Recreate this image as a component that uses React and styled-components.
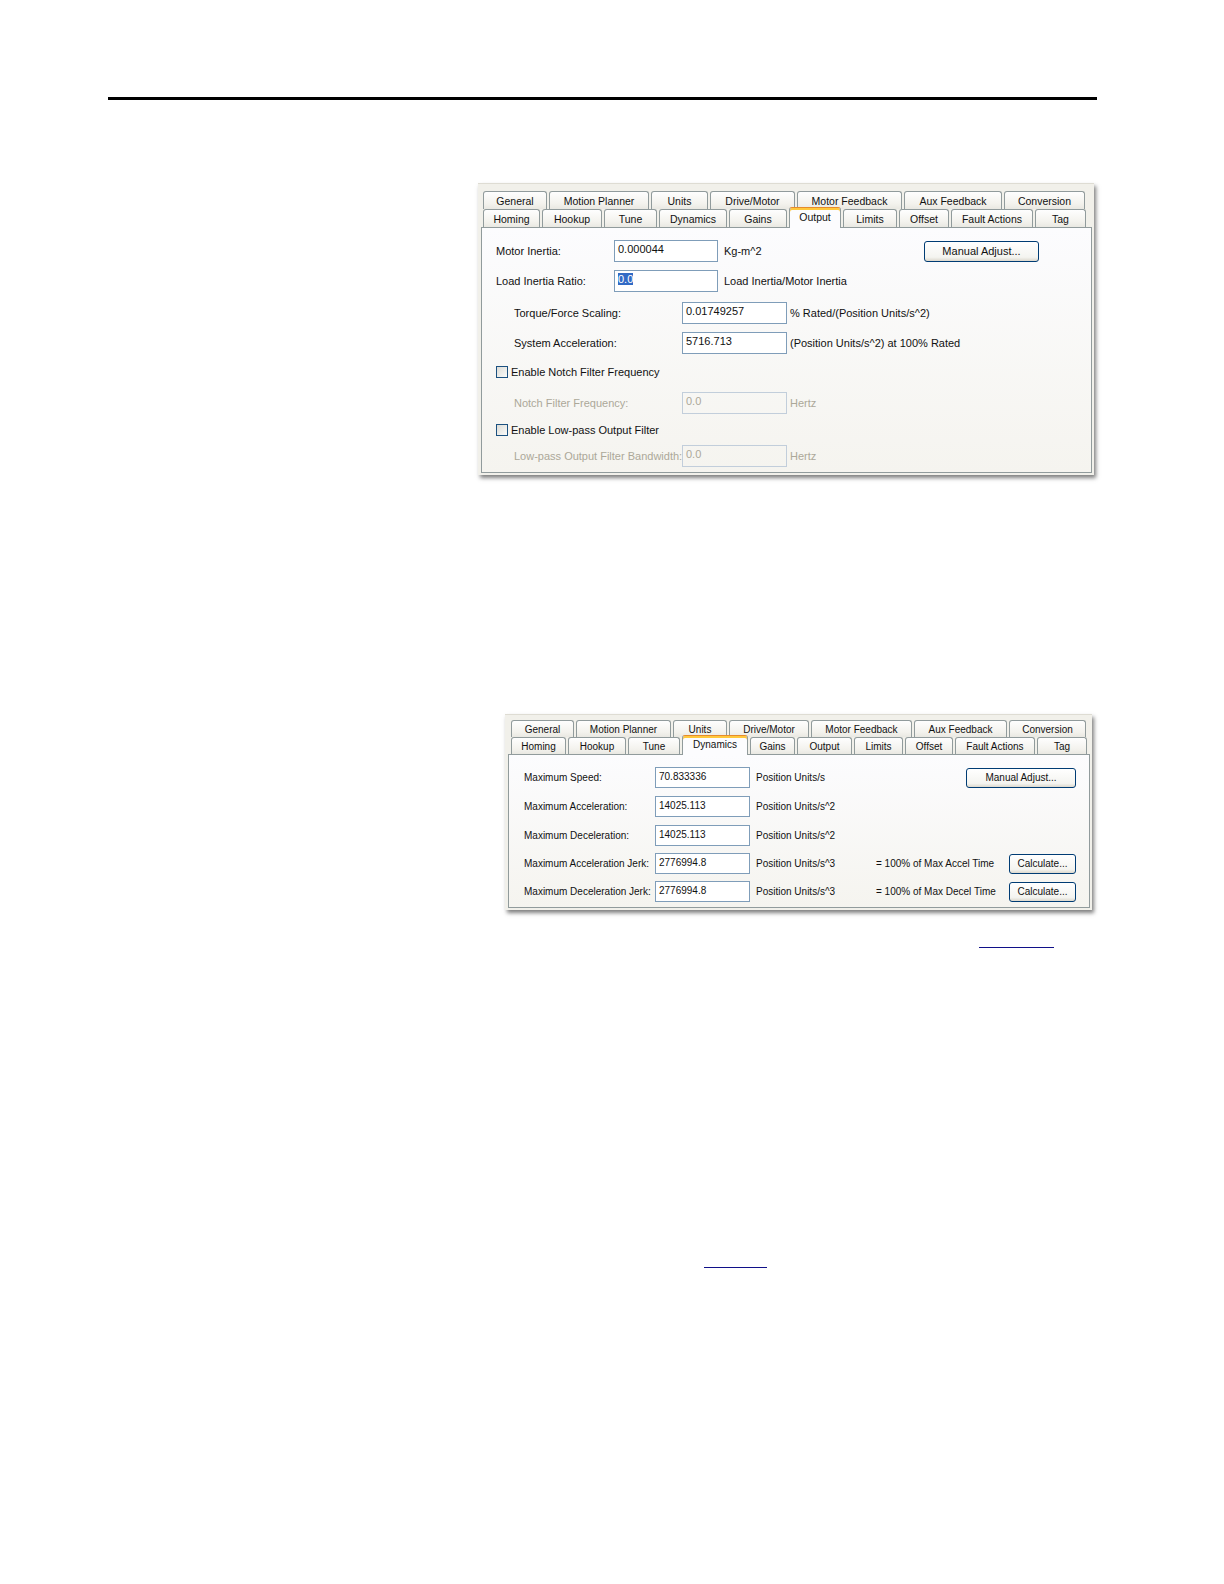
import React from "react";
import styled, { createGlobalStyle } from "styled-components";

const GlobalStyle = createGlobalStyle`
  html, body {
    margin: 0;
    padding: 0;
    background: #fff;
  }
  body {
    font-family: "Liberation Sans", Arial, sans-serif;
  }
`;

const Page = styled.div`
  width: 1224px;
  min-height: 1584px;
  box-sizing: border-box;
  padding: 97px 0 0 108px;
`;

const Rule = styled.div`
  width: 989px;
  height: 3px;
  background: #000;
`;

const Dialog = styled.div`
  box-sizing: border-box;
  margin: ${p => p.$top}px 0 0 ${p => p.$left}px;
  width: ${p => p.$width}px;
  padding: ${p => p.$padTop}px 2px 2px 3px;
  background: #f1f0ea;
  border-top: 1px solid #dedcd3;
  box-shadow: 2px 3px 4px rgba(0, 0, 0, 0.5);
  font-size: ${p => p.$font}px;
  color: #111;
`;

const TabRow = styled.div`
  display: flex;
  gap: 2px;
  height: ${p => p.$height}px;
  padding-left: ${p => p.$indent}px;
`;

const Tab = styled.div`
  flex: none;
  position: relative;
  z-index: ${p => (p.$active ? 2 : 1)};
  box-sizing: border-box;
  width: ${p => p.$width}px;
  height: ${p => (p.$active ? "calc(100% + 3px)" : "100%")};
  margin-top: ${p => (p.$active ? -2 : 0)}px;
  display: flex;
  align-items: center;
  justify-content: center;
  padding-bottom: ${p => (p.$active ? 3 : 0)}px;
  border: 1px solid #919b9c;
  border-bottom: none;
  border-radius: 3px 3px 0 0;
  white-space: nowrap;
  font-size: ${p => p.$font}px;
  background: ${p =>
    p.$active ? "#fcfcfe" : "linear-gradient(#fefefe, #f3f2ed 70%, #e9e8e2)"};
  ${p =>
    p.$active &&
    `
    border-top: 1px solid #e68b2c;
    box-shadow: inset 0 2px 0 #ffc83c;
  `}
`;

const Panel = styled.div`
  position: relative;
  box-sizing: border-box;
  height: ${p => p.$height}px;
  border: 1px solid #919b9c;
  background: linear-gradient(#fcfcfe, #f5f4ef);
  display: flex;
  flex-direction: column;
`;

const FieldRow = styled.div`
  display: flex;
  align-items: center;
  flex: none;
  height: ${p => p.$h}px;
  margin-top: ${p => p.$gap}px;
  padding-left: ${p => p.$indent}px;
  padding-right: ${p => p.$right || 0}px;
`;

const Label = styled.span`
  flex: none;
  width: ${p => (p.$width ? `${p.$width}px` : "auto")};
  color: ${p => (p.$disabled ? "#aca899" : "#111")};
  white-space: nowrap;
`;

const Field = styled.div`
  flex: none;
  box-sizing: border-box;
  width: ${p => p.$width}px;
  height: 100%;
  padding: 2px 3px 0;
  line-height: 13px;
  border: 1px solid ${p => (p.$disabled ? "#c2cedb" : "#7f9db9")};
  background: ${p => (p.$disabled ? "transparent" : "#fff")};
  color: ${p => (p.$disabled ? "#aca899" : "#111")};
  white-space: nowrap;
`;

const Selected = styled.span`
  background: #316ac5;
  color: #fff;
`;

const Unit = styled.span`
  flex: none;
  margin-left: ${p => p.$gap}px;
  width: ${p => (p.$width ? `${p.$width}px` : "auto")};
  color: ${p => (p.$disabled ? "#aca899" : "#111")};
  white-space: nowrap;
`;

const Button = styled.div`
  flex: none;
  box-sizing: border-box;
  margin-left: auto;
  width: ${p => p.$width}px;
  height: ${p => p.$height}px;
  display: flex;
  align-items: center;
  justify-content: center;
  border: 1px solid #003c74;
  border-radius: 3px;
  background: linear-gradient(#ffffff, #f4f4f0 80%, #dcd8cd);
  white-space: nowrap;
`;

const Check = styled.span`
  flex: none;
  box-sizing: border-box;
  width: 12px;
  height: 12px;
  margin-right: 3px;
  border: 1px solid #1c5180;
  background: linear-gradient(135deg, #dcdcd7, #fbfbf9);
`;

const LinkLine = styled.div`
  margin: ${p => p.$top}px 0 0 ${p => p.$left}px;
  width: ${p => p.$width}px;
  height: 1px;
  background: #101088;
`;

const outputTabs = [
  [
    ["General", 64],
    ["Motion Planner", 100],
    ["Units", 57],
    ["Drive/Motor", 85],
    ["Motor Feedback", 105],
    ["Aux Feedback", 98],
    ["Conversion", 81],
  ],
  [
    ["Homing", 57],
    ["Hookup", 60],
    ["Tune", 53],
    ["Dynamics", 68],
    ["Gains", 58],
    ["Output", 52, true],
    ["Limits", 54],
    ["Offset", 50],
    ["Fault Actions", 82],
    ["Tag", 51],
  ],
];

const dynamicsTabs = [
  [
    ["General", 63],
    ["Motion Planner", 95],
    ["Units", 54],
    ["Drive/Motor", 80],
    ["Motor Feedback", 101],
    ["Aux Feedback", 93],
    ["Conversion", 77],
  ],
  [
    ["Homing", 55],
    ["Hookup", 58],
    ["Tune", 52],
    ["Dynamics", 66, true],
    ["Gains", 45],
    ["Output", 55],
    ["Limits", 49],
    ["Offset", 48],
    ["Fault Actions", 80],
    ["Tag", 50],
  ],
];

const Tabs = ({ rows, heights, indent, font }) => (
  <>
    {rows.map((row, i) => (
      <TabRow key={i} $height={heights[i]} $indent={indent}>
        {row.map(([name, width, active]) => (
          <Tab key={name} $width={width} $active={active} $font={font}>
            {name}
          </Tab>
        ))}
      </TabRow>
    ))}
  </>
);

const OutputDialog = () => (
  <Dialog $top={83} $left={370} $width={616} $padTop={7} $font={11}>
    <Tabs rows={outputTabs} heights={[18, 18]} indent={2} font={10.5} />
    <Panel $height={246}>
      <FieldRow $h={22} $gap={12} $indent={14} $right={52}>
        <Label $width={118}>Motor Inertia:</Label>
        <Field $width={104}>0.000044</Field>
        <Unit $gap={6}>Kg-m^2</Unit>
        <Button $width={115} $height={21}>
          Manual Adjust...
        </Button>
      </FieldRow>
      <FieldRow $h={22} $gap={8} $indent={14}>
        <Label $width={118}>Load Inertia Ratio:</Label>
        <Field $width={104}>
          <Selected>0.0</Selected>
        </Field>
        <Unit $gap={6}>Load Inertia/Motor Inertia</Unit>
      </FieldRow>
      <FieldRow $h={22} $gap={10} $indent={32}>
        <Label $width={168}>Torque/Force Scaling:</Label>
        <Field $width={105}>0.01749257</Field>
        <Unit $gap={3}>% Rated/(Position Units/s^2)</Unit>
      </FieldRow>
      <FieldRow $h={22} $gap={8} $indent={32}>
        <Label $width={168}>System Acceleration:</Label>
        <Field $width={105}>5716.713</Field>
        <Unit $gap={3}>(Position Units/s^2) at 100% Rated</Unit>
      </FieldRow>
      <FieldRow $h={22} $gap={7} $indent={14}>
        <Check />
        <Label>Enable Notch Filter Frequency</Label>
      </FieldRow>
      <FieldRow $h={22} $gap={9} $indent={32}>
        <Label $width={168} $disabled>
          Notch Filter Frequency:
        </Label>
        <Field $width={105} $disabled>
          0.0
        </Field>
        <Unit $gap={3} $disabled>
          Hertz
        </Unit>
      </FieldRow>
      <FieldRow $h={22} $gap={5} $indent={14}>
        <Check />
        <Label>Enable Low-pass Output Filter</Label>
      </FieldRow>
      <FieldRow $h={22} $gap={4} $indent={32}>
        <Label $width={168} $disabled>
          Low-pass Output Filter Bandwidth:
        </Label>
        <Field $width={105} $disabled>
          0.0
        </Field>
        <Unit $gap={3} $disabled>
          Hertz
        </Unit>
      </FieldRow>
    </Panel>
  </Dialog>
);

const limits = [
  ["Maximum Speed:", "70.833336", "Position Units/s", 12],
  ["Maximum Acceleration:", "14025.113", "Position Units/s^2", 8],
  ["Maximum Deceleration:", "14025.113", "Position Units/s^2", 8],
  ["Maximum Acceleration Jerk:", "2776994.8", "Position Units/s^3", 7, "= 100% of Max Accel Time"],
  ["Maximum Deceleration Jerk:", "2776994.8", "Position Units/s^3", 7, "= 100% of Max Decel Time"],
];

const DynamicsDialog = () => (
  <Dialog $top={239} $left={397} $width={587} $padTop={5} $font={10}>
    <Tabs rows={dynamicsTabs} heights={[17, 17]} indent={3} font={10} />
    <Panel $height={154}>
      {limits.map(([label, value, unit, gap, note], i) => (
        <FieldRow key={label} $h={21} $gap={gap} $indent={15} $right={13}>
          <Label $width={131}>{label}</Label>
          <Field $width={95}>{value}</Field>
          <Unit $gap={6} $width={120}>
            {unit}
          </Unit>
          {note && <Label>{note}</Label>}
          {i === 0 && (
            <Button $width={110} $height={20}>
              Manual Adjust...
            </Button>
          )}
          {note && (
            <Button $width={67} $height={20}>
              Calculate...
            </Button>
          )}
        </FieldRow>
      ))}
    </Panel>
  </Dialog>
);

export default function App() {
  return (
    <>
      <GlobalStyle />
      <Page>
        <Rule />
        <OutputDialog />
        <DynamicsDialog />
        <LinkLine $top={37} $left={871} $width={75} />
        <LinkLine $top={319} $left={596} $width={63} />
      </Page>
    </>
  );
}
